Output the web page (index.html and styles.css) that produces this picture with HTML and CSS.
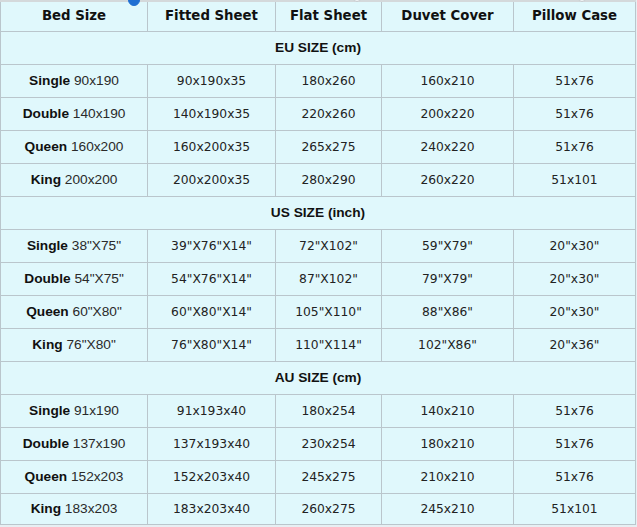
FILE: index.html
```html
<!DOCTYPE html>
<html>
<head>
<meta charset="utf-8">
<link rel="stylesheet" href="styles.css">
</head>
<body>
<div class="frame">
  <div class="markers">
    <span class="dot dot-active dot-1"></span>
    <span class="dot dot-2"></span>
    <span class="dot dot-3"></span>
  </div>
  <table class="sizes">
    <colgroup>
      <col class="c1"><col class="c2"><col class="c3"><col class="c4"><col class="c5">
    </colgroup>
    <thead>
      <tr>
        <th>Bed Size</th><th>Fitted Sheet</th><th>Flat Sheet</th><th>Duvet Cover</th><th>Pillow Case</th>
      </tr>
    </thead>
    <tbody>
      <tr class="section"><td colspan="5">EU SIZE (cm)</td></tr>
      <tr><td class="bed"><b>Single</b> 90x190</td><td>90x190x35</td><td>180x260</td><td>160x210</td><td>51x76</td></tr>
      <tr><td class="bed"><b>Double</b> 140x190</td><td>140x190x35</td><td>220x260</td><td>200x220</td><td>51x76</td></tr>
      <tr><td class="bed"><b>Queen</b> 160x200</td><td>160x200x35</td><td>265x275</td><td>240x220</td><td>51x76</td></tr>
      <tr><td class="bed"><b>King</b> 200x200</td><td>200x200x35</td><td>280x290</td><td>260x220</td><td>51x101</td></tr>
      <tr class="section"><td colspan="5">US SIZE (inch)</td></tr>
      <tr><td class="bed"><b>Single</b> 38"X75"</td><td>39"X76"X14"</td><td>72"X102"</td><td>59"X79"</td><td>20"x30"</td></tr>
      <tr><td class="bed"><b>Double</b> 54"X75"</td><td>54"X76"X14"</td><td>87"X102"</td><td>79"X79"</td><td>20"x30"</td></tr>
      <tr><td class="bed"><b>Queen</b> 60"X80"</td><td>60"X80"X14"</td><td>105"X110"</td><td>88"X86"</td><td>20"x30"</td></tr>
      <tr><td class="bed"><b>King</b> 76"X80"</td><td>76"X80"X14"</td><td>110"X114"</td><td>102"X86"</td><td>20"x36"</td></tr>
      <tr class="section"><td colspan="5">AU SIZE (cm)</td></tr>
      <tr><td class="bed"><b>Single</b> 91x190</td><td>91x193x40</td><td>180x254</td><td>140x210</td><td>51x76</td></tr>
      <tr><td class="bed"><b>Double</b> 137x190</td><td>137x193x40</td><td>230x254</td><td>180x210</td><td>51x76</td></tr>
      <tr><td class="bed"><b>Queen</b> 152x203</td><td>152x203x40</td><td>245x275</td><td>210x210</td><td>51x76</td></tr>
      <tr class="last"><td class="bed"><b>King</b> 183x203</td><td>183x203x40</td><td>260x275</td><td>245x210</td><td>51x101</td></tr>
    </tbody>
  </table>
</div>
</body>
</html>
```

FILE: styles.css
```css
html, body {
  margin: 0;
  padding: 0;
}

body {
  background: #e7eff3;
  width: 637px;
  height: 527px;
  overflow: hidden;
}

.frame {
  position: relative;
  width: 636px;
  border-top: 2px solid #d4d9db;
}

.markers {
  position: absolute;
  top: 0;
  left: 0;
  right: 0;
  height: 0;
  z-index: 2;
}

.dot {
  position: absolute;
  width: 6px;
  height: 6px;
  border-radius: 50%;
  background: #f4f6f7;
  border: 1px solid #c6cbce;
  top: -8px;
}

.dot-active {
  width: 10px;
  height: 10px;
  background: #1f6fd2;
  border-color: #1f6fd2;
  top: -8px;
}

.dot-1 { left: 128px; }
.dot-2 { left: 353px; }
.dot-3 { left: 578px; }

.sizes {
  border-collapse: separate;
  border-spacing: 0;
  table-layout: fixed;
  width: 636px;
  background: #e0f8fc;
}

.c1 { width: 148px; }
.c2 { width: 128px; }
.c3 { width: 106px; }
.c4 { width: 132px; }
.c5 { width: 122px; }

.sizes th,
.sizes td {
  padding: 0;
  text-align: center;
  vertical-align: middle;
  border-right: 1px solid #bac6cc;
  border-bottom: 1px solid #bac6cc;
  white-space: nowrap;
}

.sizes th:first-child,
.sizes td:first-child {
  border-left: 1px solid #bac6cc;
}

.sizes th {
  height: 26px;
  padding-bottom: 3px;
  font-family: "DejaVu Sans", Verdana, sans-serif;
  font-weight: bold;
  font-size: 13.3px;
  color: #111;
}

.sizes td {
  height: 32px;
  font-family: "DejaVu Sans", Verdana, sans-serif;
  font-size: 12.3px;
  color: #222;
}

.sizes .last td {
  height: 30px;
}

.sizes td.bed {
  font-family: "Liberation Sans", Arial, sans-serif;
  font-size: 13.7px;
  color: #2a2a2a;
  padding-bottom: 2px;
  height: 30px;
}

.sizes .last td.bed {
  height: 28px;
}

.sizes td.bed b {
  color: #111;
}

.sizes .section td {
  font-family: "Liberation Sans", Arial, sans-serif;
  font-weight: bold;
  font-size: 13.7px;
  color: #111;
  padding-bottom: 2px;
  height: 30px;
}
```
